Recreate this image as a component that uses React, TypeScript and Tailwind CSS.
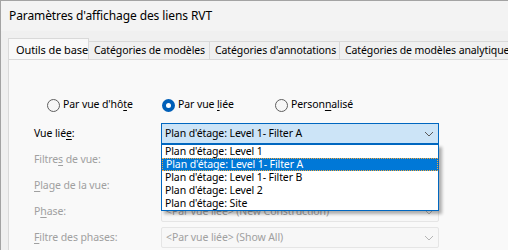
import React from 'react';

const font = { fontFamily: '"Noto Sans", "Open Sans", Arial, sans-serif' };

function Key({ children }: { children: React.ReactNode }) {
  return <span className="underline decoration-1 underline-offset-[2px]">{children}</span>;
}

function Radio({ label, checked }: { label: React.ReactNode; checked?: boolean }) {
  return (
    <div className="flex items-center gap-[3px]">
      {checked ? (
        <span className="flex h-[13px] w-[13px] items-center justify-center rounded-full bg-[#005fb8]">
          <span className="h-[5px] w-[5px] rounded-full bg-white" />
        </span>
      ) : (
        <span className="h-[13px] w-[13px] rounded-full border border-[#5f5f5f] bg-[#f7f7f7]" />
      )}
      <span>{label}</span>
    </div>
  );
}

function Chevron({ color }: { color: string }) {
  return (
    <svg width="10" height="6" viewBox="0 0 10 6" className="shrink-0">
      <path d="M1 1 L5 5 L9 1" fill="none" stroke={color} strokeWidth="1" />
    </svg>
  );
}

const items = [
  "Plan d'étage: Level 1",
  "Plan d'étage: Level 1- Filter A",
  "Plan d'étage: Level 1- Filter B",
  "Plan d'étage: Level 2",
  "Plan d'étage: Site",
];

export default function App() {
  const tabs = [
    { label: 'Catégories de modèles', w: 'w-[121px]' },
    { label: "Catégories d'annotations", w: 'w-[130px]' },
    { label: 'Catégories de modèles analytiques', w: 'w-[200px]' },
  ];

  return (
    <div
      className="flex h-[250px] w-[508px] flex-col overflow-hidden border-l border-t border-[#a3a3a3] bg-[#f0f0f0] text-[10.5px] tracking-[-0.1px] text-black"
      style={font}
    >
      <div className="flex h-[30px] shrink-0 items-center bg-[#f3f3f3] pl-[8px] text-[12px]">Paramètres d'affichage des liens RVT</div>

      <div className="mt-[7px] flex h-[21px] shrink-0 items-end pl-[7px]">
        <div className="relative z-10 flex h-[21px] w-[83px] items-start border-x border-t border-[#d9d9d9] bg-[#f9f9f9] pl-[7px] pt-[3px] text-[11px] whitespace-nowrap">
          Outils de base
        </div>
        {tabs.map((t) => (
          <div
            key={t.label}
            className={`flex h-[18px] ${t.w} shrink-0 items-center border-r border-t border-[#d9d9d9] pl-[5px] whitespace-nowrap`}
          >
            {t.label}
          </div>
        ))}
      </div>

      <div className="ml-[7px] flex-1 border-l border-t border-[#d9d9d9] bg-[#f9f9f9]">
        <div className="ml-[38px] mt-[37px] flex h-[16px] items-center">
          <div className="w-[115px]">
            <Radio label={<>Par vue d'hô<Key>t</Key>e</>} />
          </div>
          <div className="w-[113px]">
            <Radio checked label={<>Par vue <Key>l</Key>iée</>} />
          </div>
          <Radio label={<>Person<Key>n</Key>alisé</>} />
        </div>

        <div className="ml-[25px] mt-[10px] flex flex-col gap-[5px]">
          <div className="flex h-[21px] items-center">
            <div className="w-[127px]">Vue lié<Key>e</Key>:</div>
            <div className="relative">
              <div className="flex h-[21px] w-[278px] items-center justify-between border border-[#0067c0] bg-[#cce4f7] pl-[3px] pr-[4px]">
                <span>Plan d'étage: Level 1- Filter A</span>
                <Chevron color="#5a5a5a" />
              </div>
              <div className="absolute left-0 top-[21px] z-20 w-[278px] border border-[#0067c0] bg-white shadow-[3px_3px_3px_rgba(0,0,0,0.3)]">
                {items.map((it, i) => (
                  <div
                    key={it}
                    className={`flex h-[13px] items-center pl-[3px] leading-[13px] ${i === 1 ? 'border border-dotted border-[#f3a83b] bg-[#0078d7] pl-[2px] text-white' : ''}`}
                  >
                    {it}
                  </div>
                ))}
              </div>
            </div>
          </div>

          <div className="flex h-[21px] items-center text-[#a0a0a0]">
            <div className="w-[127px]">Filtre<Key>s</Key> de vue:</div>
          </div>
          <div className="flex h-[21px] items-center text-[#a0a0a0]">
            <div className="w-[127px]"><Key>P</Key>lage de la vue:</div>
          </div>
          <div className="flex h-[21px] items-center text-[#a0a0a0]">
            <div className="w-[127px]">P<Key>h</Key>ase:</div>
            <div className="flex h-[21px] w-[278px] items-center justify-between rounded-[2px] border border-[#e5e5e5] bg-[#f7f7f7] pl-[4px] pr-[4px]">
              <span>&lt;Par vue liée&gt; (New Construction)</span>
              <Chevron color="#b5b5b5" />
            </div>
          </div>
          <div className="flex h-[21px] items-center text-[#a0a0a0]">
            <div className="w-[127px]"><Key>F</Key>iltre des phases:</div>
            <div className="flex h-[21px] w-[278px] items-center justify-between rounded-[2px] border border-[#e5e5e5] bg-[#f7f7f7] pl-[4px] pr-[4px]">
              <span>&lt;Par vue liée&gt; (Show All)</span>
              <Chevron color="#b5b5b5" />
            </div>
          </div>
        </div>
      </div>
    </div>
  );
}
